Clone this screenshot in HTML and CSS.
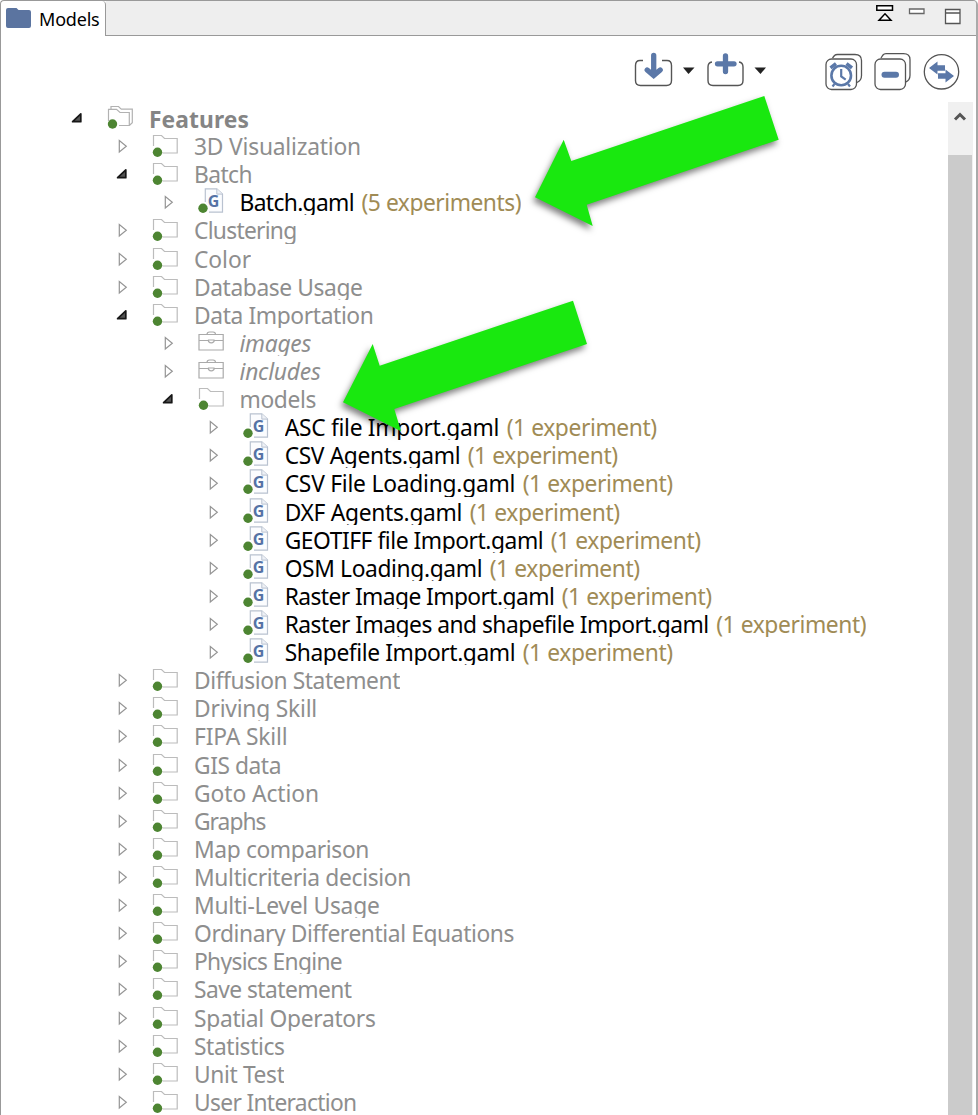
FILE: index.html
```html
<!DOCTYPE html>
<html lang="en">
<head>
<meta charset="utf-8">
<title>Models</title>
<link rel="stylesheet" href="styles.css">
</head>
<body>
<svg class="defs" aria-hidden="true">
  <symbol id="closed" viewBox="0 0 20 28"><path d="M6.300 9.500v11.500l7-5.700z" fill="#fff" stroke="#959595" stroke-width="1.2"/></symbol>
  <symbol id="open" viewBox="0 0 20 28"><path d="M12.800 10.900v7.800H4.600z" fill="#555" stroke="#171717" stroke-width="1.7" stroke-linejoin="round"/></symbol>
  <symbol id="folder" viewBox="0 0 30 28"><path d="M4.500 15V4.500h8l3 3h12.700v14.500H13.500" fill="none" stroke="#bcbcbc" stroke-width="1.2"/><circle cx="8.500" cy="21.200" r="4.700" fill="#4d8532"/></symbol>
  <symbol id="folders" viewBox="0 0 30 28"><path d="M4.500 18V6.300h8l3.500 3.200h9.300v13H15M7 6V3.500h7.500l2.800 2.700H28.300v13.500l-3 2.800" fill="none" stroke="#b2b2b2" stroke-width="1.2"/><circle cx="8.500" cy="21" r="4.700" fill="#4d8532"/></symbol>
  <symbol id="case" viewBox="0 0 30 28"><path d="M4 6.500h24.200v15.500H4zM4 12.500h9M19.500 12.500h8.700M12 6.500q0-2.500 2.500-2.500h3.500q2.500 0 2.500 2.500M13.500 12h5.500v1.500q-2.800 2.800-5.500 0z" fill="none" stroke="#aaa" stroke-width="1.200"/></symbol>
  <symbol id="file" viewBox="0 0 30 28"><path d="M10.300 15V1.800h11.500l5.700 5.300v18H14" fill="#fbfcfe" stroke="#b9c2d0" stroke-width="1.200"/><path d="M21.800 1.800v5.300h5.700" fill="#eef1f6" stroke="#b9c2d0"/><text x="12.700" y="20.300" class="g">G</text><circle cx="8" cy="21.200" r="4.700" fill="#4d8532"/></symbol>
</svg>

<div class="view">
  <header class="tabs">
    <div class="tab">
      <svg width="26" height="22" viewBox="0 0 26 22"><path d="M2 0h8.500l2 2H23q2 0 2 2v14q0 2-2 2H2q-2 0-2-2V2q0-2 2-2z" fill="#5b74a0"/></svg>
      <span>Models</span>
    </div>
    <div class="strip">
      <svg width="90" height="24" viewBox="0 0 90 24" fill="none" stroke-width="1.300">
        <path d="M1.800 4.800h15.700v4.400H1.800zM4 19.300h12L10 12.800z" fill="#fff" stroke="#000" stroke-width="1.500"/>
        <path d="M34.500 8h14.500v4.500H34.500z" fill="#fff" stroke="#666"/>
        <path d="M70.500 8.500h14.500v14H70.500zM70.500 12h14.500" fill="#fff" stroke="#555"/>
      </svg>
    </div>
  </header>

  <div class="toolbar">
    <svg class="drop" width="60" height="40" viewBox="0 0 60 40"><path d="M12 6.500H9q-4.500 0-4.500 5v15q0 5 5 5h26q5 0 5-5v-15q0-5-4.500-5h-5" fill="none" stroke="#555" stroke-width="1.400"/><path d="M22.700 1.500v19M16.200 16l6.500 5.500 6.500-5.500" fill="none" stroke="#5b78a8" stroke-width="5.300" stroke-linecap="round"/><path d="M52 13.500h11.500L57.500 20z" fill="#222"/></svg>
    <svg class="drop" width="62" height="40" viewBox="0 0 62 40"><path d="M8 8q-4 .5-4 5v13.500q0 5 5 5h25q5 0 5-5V13q0-4.500-4-5" fill="none" stroke="#555" stroke-width="1.400"/><path d="M21.500 2v15.500M13.500 9.800h16.500" fill="none" stroke="#5b78a8" stroke-width="5.300" stroke-linecap="round"/><path d="M50.500 13.500H62L56.500 20z" fill="#222"/></svg>
    <svg class="wide" width="136" height="40" viewBox="0 0 136 40" fill="none" stroke="#555" stroke-width="1.300">
      <path d="M7.500 7l2-2.500q1-1 3-1h17.500q6.500 0 6.500 6v15q0 5-4.500 7"/>
      <rect x="1" y="8" width="30.500" height="30.500" rx="5.500"/>
      <circle cx="16.200" cy="24.500" r="9.800" stroke="#5b78a8" stroke-width="2.600"/>
      <path d="M16.200 18v7.500l4.500 3.200M9.500 33l-2 2.500M23 33l2 2.500" stroke="#5b78a8" stroke-width="2.200"/>
      <path d="M5.500 16.800l5.500-4.200M21.500 12.600l5.500 4.200" stroke="#5b78a8" stroke-width="3.500"/>
      <path d="M56 7l2-3q1-1.300 3-1.300h17.500q6.500 0 6.500 6v15.500q0 5-4.500 7"/>
      <rect x="50" y="8" width="30.500" height="30.500" rx="5.500"/>
      <path d="M59.500 23.800H71" stroke="#5b78a8" stroke-width="6" stroke-linecap="round"/>
      <circle cx="116.500" cy="20.800" r="17.200"/>
      <path d="M104 17l8.500-6.500v3.700h7.500v5.500h-7.500v3.800zM129 25l-8.500-6.500v3.700H113v5.500h7.500v3.800z" fill="#5b78a8" stroke="none"/>
    </svg>
  </div>

  <main class="body">
    <div class="tree" id="tree"></div>
    <div class="scroll">
      <div class="up"><svg width="14" height="12" viewBox="0 0 14 12"><path d="M2 8.500l5-5 5 5" fill="none" stroke="#555" stroke-width="3"/></svg></div>
      <div class="thumb"></div>
    </div>
  </main>

  <svg class="arrows" width="978" height="1115" viewBox="0 0 978 1115">
    <path d="M764.300 96L778.700 139.700 586.700 204.700 592.700 226 535 197.300 563.700 139.700 571.300 161z"/>
    <path d="M573 300.700L587 344 394.300 409 401 431.300 343 402.300 372.700 344 379.700 365.700z"/>
  </svg>
</div>
<script src="tree.js"></script>
</body>
</html>
```

FILE: styles.css
```css
* { box-sizing: border-box; }
body { margin: 0; background: #fff; font-family: "Noto Sans", "Open Sans", sans-serif; }
.defs { display: block; width: 0; height: 0; }
.view { position: relative; width: 978px; height: 1115px; overflow: hidden; border-left: 1px solid #999; border-right: 2px solid #aaa; border-top: 1px solid #999; border-radius: 4px 5px 0 0; display: flex; flex-direction: column; }
.tabs { display: flex; height: 35px; flex: none; }
.tab { width: 105px; padding: 7px 0 0 5px; display: flex; gap: 7px; align-items: flex-start; border-right: 1px solid #999; border-top-right-radius: 4px; }
.tab span { font-size: 18px; line-height: 23px; letter-spacing: -0.2px; color: #000; }
.strip { flex: 1; background: #eee; border-bottom: 1px solid #999; display: flex; justify-content: flex-end; padding-right: 11px; }
.toolbar { flex: none; height: 66px; padding: 15px 15px 0 0; display: flex; justify-content: flex-end; }
.toolbar svg { overflow: visible; flex: none; }
.drop { margin: 3px 13px 0 0; }
.wide { margin-left: 46px; }
.body { flex: 1; min-height: 0; display: flex; justify-content: space-between; }
.tree { flex: 1; overflow: hidden; padding-top: 1px; }
.row { display: flex; height: 28.12px; }
.row svg { flex: none; height: 28px; }
.d0 { padding-left: 67px; }
.d1 { padding-left: 112px; }
.d2 { padding-left: 157.500px; }
.d3 { padding-left: 202.700px; }
.twist { width: 20px; }
.icon { width: 30px; margin: 0 15px 0 16px; }
.label { height: 28.12px; line-height: 32.400px; font-size: 22.800px; white-space: pre; overflow: hidden; color: #8e8e8e; }
.label.bold { font-weight: 700; color: #858585; line-height: 34px; }
.label.italic { font-style: italic; }
.label.model { color: #000; }
.count { height: 28.12px; line-height: 32.400px; font-size: 22.800px; white-space: pre; overflow: hidden; color: #a08b55; margin-left: 7.500px; }
.g { font: 700 16px "Noto Sans", sans-serif; fill: #5572a5; }
.scroll { width: 25px; margin-right: 3px; background: #f0f0f0; display: flex; flex-direction: column; }
.up { height: 53px; padding: 4px 0 0 5px; }
.thumb { flex: 1; margin-right: 1px; background: #cbcbcb; }
.arrows { position: absolute; left: -1px; top: -1px; pointer-events: none; }
.arrows path { fill: #19e80f; filter: drop-shadow(-2px 4px 3px rgba(0,0,0,.5)); }
```

FILE: tree.js
```javascript
// depth, state, icon, label, label width, optional experiment count, count width
const rows = [
  [0, "open", "folders", "Features", 100],
  [1, "closed", "folder", "3D Visualization", 167],
  [1, "open", "folder", "Batch", 58],
  [2, "closed", "file", "Batch.gaml", 114.5, "(5 experiments)", 159.5],
  [1, "closed", "folder", "Clustering", 102.5],
  [1, "closed", "folder", "Color", 57],
  [1, "closed", "folder", "Database Usage", 168.5],
  [1, "open", "folder", "Data Importation", 179.5],
  [2, "closed", "case", "images", 71.5],
  [2, "closed", "case", "includes", 81],
  [2, "open", "folder", "models", 76.5],
  [3, "closed", "file", "ASC file Import.gaml", 214.5, "(1 experiment)", 150],
  [3, "closed", "file", "CSV Agents.gaml", 175.5, "(1 experiment)", 150],
  [3, "closed", "file", "CSV File Loading.gaml", 230.5, "(1 experiment)", 150],
  [3, "closed", "file", "DXF Agents.gaml", 177.5, "(1 experiment)", 150],
  [3, "closed", "file", "GEOTIFF file Import.gaml", 258.5, "(1 experiment)", 150],
  [3, "closed", "file", "OSM Loading.gaml", 197.5, "(1 experiment)", 150],
  [3, "closed", "file", "Raster Image Import.gaml", 269.5, "(1 experiment)", 150],
  [3, "closed", "file", "Raster Images and shapefile Import.gaml", 424, "(1 experiment)", 150],
  [3, "closed", "file", "Shapefile Import.gaml", 230.5, "(1 experiment)", 150],
  [1, "closed", "folder", "Diffusion Statement", 206],
  [1, "closed", "folder", "Driving Skill", 123],
  [1, "closed", "folder", "FIPA Skill", 93.5],
  [1, "closed", "folder", "GIS data", 87],
  [1, "closed", "folder", "Goto Action", 125],
  [1, "closed", "folder", "Graphs", 71.5],
  [1, "closed", "folder", "Map comparison", 175],
  [1, "closed", "folder", "Multicriteria decision", 217],
  [1, "closed", "folder", "Multi-Level Usage", 185.5],
  [1, "closed", "folder", "Ordinary Differential Equations", 320],
  [1, "closed", "folder", "Physics Engine", 148],
  [1, "closed", "folder", "Save statement", 157.5],
  [1, "closed", "folder", "Spatial Operators", 181.5],
  [1, "closed", "folder", "Statistics", 90.5],
  [1, "closed", "folder", "Unit Test", 90.5],
  [1, "closed", "folder", "User Interaction", 162.5]
];
const tree = document.getElementById("tree");

function addText(row, cls, text, width) {
  const el = document.createElement("span");
  el.className = cls;
  el.textContent = text;
  row.append(el);
  const natural = el.getBoundingClientRect().width;
  el.style.letterSpacing = ((width - natural) / text.length).toFixed(3) + "px";
}

for (const [depth, state, icon, label, width, count, countWidth] of rows) {
  const row = document.createElement("div");
  row.className = "row d" + depth;
  row.innerHTML = `<svg class="twist"><use href="#${state}"/></svg><svg class="icon"><use href="#${icon}"/></svg>`;
  tree.append(row);
  const style = { folders: " bold", case: " italic", file: " model" }[icon] || "";
  addText(row, "label" + style, label, width);
  if (count) addText(row, "count", count, countWidth);
}
```
